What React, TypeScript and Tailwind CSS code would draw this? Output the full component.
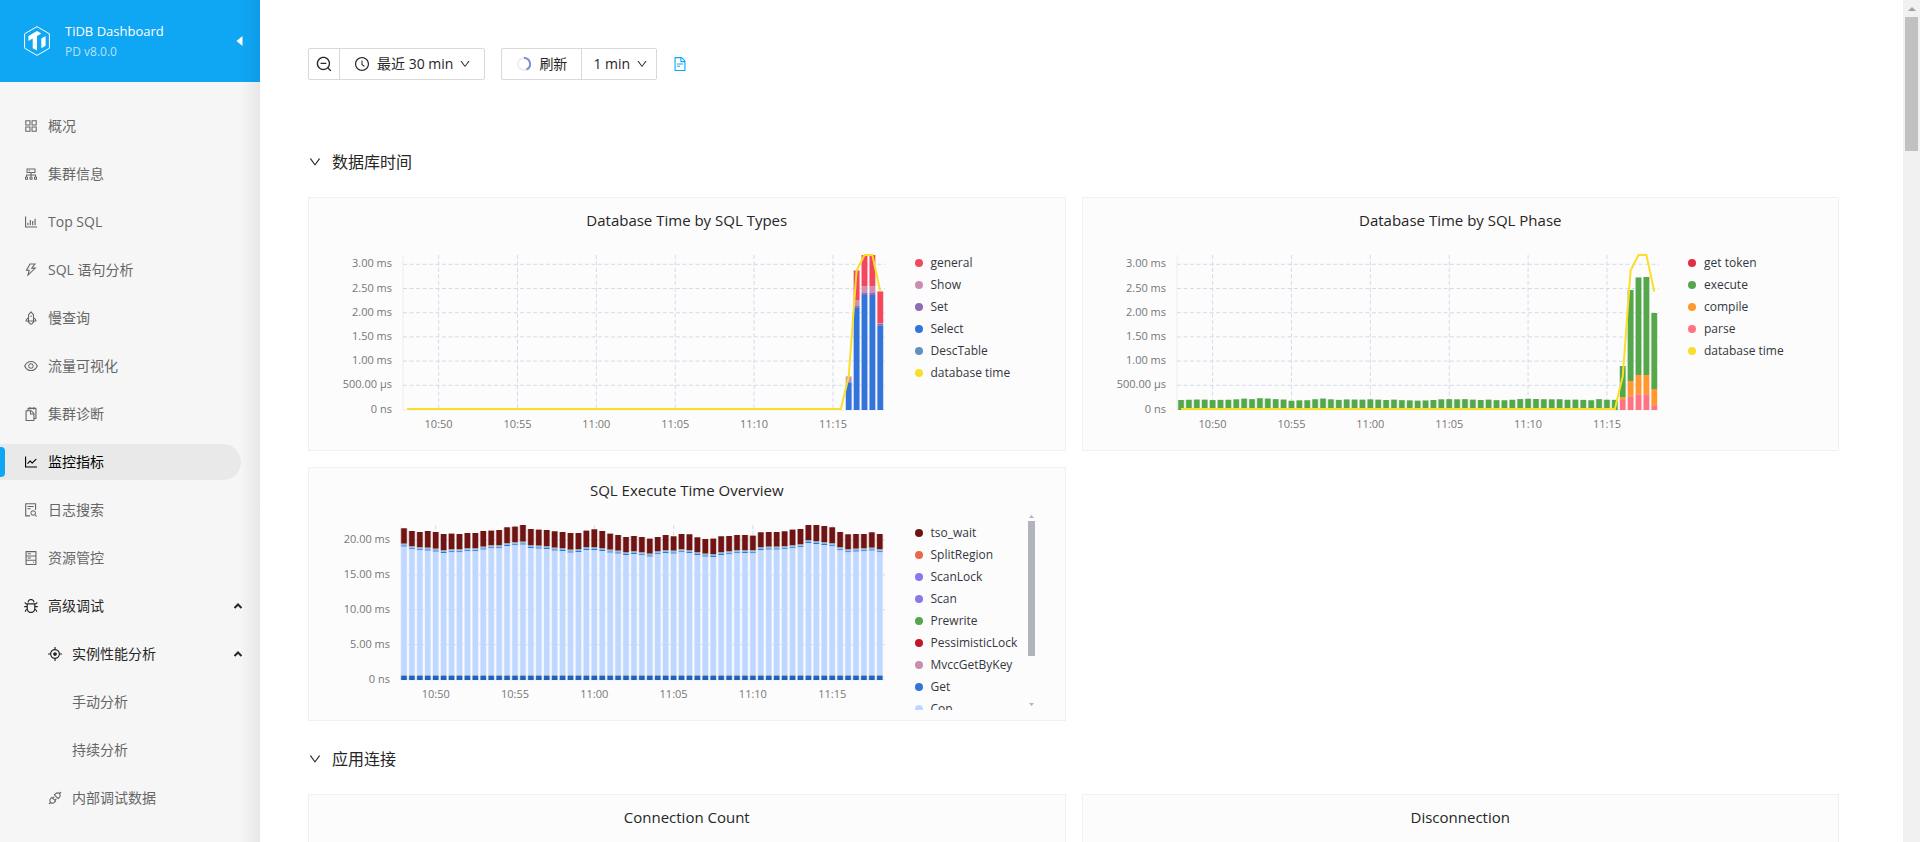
import React from 'react';
import {
  AiOutlineAim,
  AiOutlineApi,
  AiOutlineAppstore,
  AiOutlineBarChart,
  AiOutlineBug,
  AiOutlineClockCircle,
  AiOutlineCluster,
  AiOutlineDown,
  AiOutlineEye,
  AiOutlineFileSearch,
  AiOutlineFileText,
  AiOutlineHdd,
  AiOutlineLineChart,
  AiOutlineRocket,
  AiOutlineSnippets,
  AiOutlineThunderbolt,
  AiOutlineZoomOut,
} from 'react-icons/ai';
import type { IconType } from 'react-icons';
import clsx from 'clsx';

interface MenuItem {
  label: string;
  icon?: IconType;
  level?: number;
  active?: boolean;
  open?: boolean;
}

interface LegendItem {
  name: string;
  color: string;
}

interface Segment {
  top: number;
  bottom: number;
  color: string;
}

interface Bar {
  index: number;
  segments: Segment[];
}

interface ChartProps {
  left: number;
  firstTick: number;
  step: number;
  yTicks: { label: string; y: number }[];
  bars: Bar[];
  line?: [number, number][];
}

const MENU: MenuItem[] = [
  { label: '概况', icon: AiOutlineAppstore },
  { label: '集群信息', icon: AiOutlineCluster },
  { label: 'Top SQL', icon: AiOutlineBarChart },
  { label: 'SQL 语句分析', icon: AiOutlineThunderbolt },
  { label: '慢查询', icon: AiOutlineRocket },
  { label: '流量可视化', icon: AiOutlineEye },
  { label: '集群诊断', icon: AiOutlineSnippets },
  { label: '监控指标', icon: AiOutlineLineChart, active: true },
  { label: '日志搜索', icon: AiOutlineFileSearch },
  { label: '资源管控', icon: AiOutlineHdd },
  { label: '高级调试', icon: AiOutlineBug, open: true },
  { label: '实例性能分析', icon: AiOutlineAim, level: 1, open: true },
  { label: '手动分析', level: 2 },
  { label: '持续分析', level: 2 },
  { label: '内部调试数据', icon: AiOutlineApi, level: 1 },
];

const TIMES = ['10:50', '10:55', '11:00', '11:05', '11:10', '11:15'];

// chart drawing area, in svg units
const TOP = 15;
const BASE = 170;

const MS_TICKS = ['0 ns', '500.00 µs', '1.00 ms', '1.50 ms', '2.00 ms', '2.50 ms', '3.00 ms'].map(
  (label, i) => ({ label, y: 169.5 - i * 24.2 })
);
const OVERVIEW_TICKS = ['0 ns', '5.00 ms', '10.00 ms', '15.00 ms', '20.00 ms'].map((label, i) => ({
  label,
  y: 169.5 - i * 34.9,
}));

// [bar index, y]
const DB_TIME: [number, number][] = [
  [0, 169],
  [55, 169],
  [56, 136.5],
  [57, 30.5],
  [58, 15],
  [59, 15],
  [60, 51.5],
];

const RED = '#f5475c';
const PINK = '#cc8fb0';
const PURPLE = '#8f6bb8';
const BLUE = '#3274d9';
const GREEN = '#56a64b';
const ORANGE = '#ff9830';
const ROSE = '#ff7383';

// stacks a bar from its top edge down to the base line
const stack = (index: number, parts: [number, string][]): Bar => ({
  index,
  segments: parts.map(([top, color], i) => ({
    top,
    bottom: i + 1 < parts.length ? parts[i + 1][0] : BASE,
    color,
  })),
});

const TYPE_BARS: Bar[] = [
  stack(56, [[136.5, PINK], [142.5, BLUE]]),
  stack(57, [[30.5, RED], [60.5, PINK], [66, PURPLE], [67.5, BLUE]]),
  stack(58, [[TOP, RED], [46.5, PINK], [53, PURPLE], [55, BLUE]]),
  stack(59, [[TOP, RED], [46.5, PINK], [53, PURPLE], [55, BLUE]]),
  stack(60, [[51.5, RED], [83, PINK], [84, PURPLE], [85.5, BLUE]]),
];

const IDLE_HEIGHTS = [
  10, 10.2, 10.4, 10.3, 9.9, 10.1, 10.2, 10.6, 11.3, 10.8, 11.7, 11.4, 10.8, 10.4, 9.2, 9.6, 9.7, 10.7,
  11.4, 10.6, 10.1, 10.5, 10.4, 10.3, 10.6, 10.3, 10, 10.3, 9.8, 9.6, 9.3, 9.5, 10, 10.6, 10.8, 10.6,
  10.8, 10.3, 10, 10.3, 9.8, 9.7, 10.2, 10.9, 11.2, 11, 10.7, 10.6, 10.7, 10.2, 10.3, 10.1, 9.7, 10.8,
  10.2, 10.1,
];

const PHASE_BARS: Bar[] = [
  ...IDLE_HEIGHTS.map((h, i) => stack(i, [[BASE - h, GREEN]])),
  stack(56, [[126, GREEN], [157.5, ORANGE], [160, ROSE]]),
  stack(57, [[50, GREEN], [141, ORANGE], [156.5, ROSE]]),
  stack(58, [[37.5, GREEN], [135, ORANGE], [154.5, ROSE]]),
  stack(59, [[37, GREEN], [135, ORANGE], [154.5, ROSE]]),
  stack(60, [[73, GREEN], [149, ORANGE], [165.5, ROSE]]),
];

// [top of tso_wait, bottom of tso_wait] in thirds of a unit, counted from 50 units above the plot
const TSO_WAIT = [
  [205, 251], [213, 259], [216, 262], [213, 263], [216, 266], [222, 270], [221, 268], [222, 268],
  [219, 265], [219, 265], [213, 260], [212, 256], [210, 256], [202, 249], [200, 247], [195, 245],
  [207, 255], [209, 257], [210, 258], [214, 263], [216, 264], [219, 269], [219, 267], [212, 261],
  [208, 261], [213, 264], [221, 269], [225, 272], [231, 276], [228, 273], [231, 277], [236, 281],
  [231, 274], [225, 270], [229, 272], [222, 268], [223, 270], [232, 276], [237, 281], [236, 282],
  [229, 276], [228, 274], [225, 271], [225, 270], [227, 271], [217, 261], [216, 260], [216, 260],
  [214, 259], [209, 256], [207, 253], [195, 240], [195, 243], [198, 246], [202, 250], [216, 262],
  [223, 268], [222, 266], [222, 265], [217, 263], [222, 268],
];

const OVERVIEW_BARS: Bar[] = TSO_WAIT.map(([top, bottom], i) => {
  const edge = bottom / 3 - 50;
  return stack(i, [
    [top / 3 - 50, '#701313'],
    [edge, '#8ea79a'],
    [edge + 1, '#8ab8ff'],
    [edge + 2, '#3274d9'],
    [edge + 3, '#c0d8ff'],
    [165, '#8fb5a8'],
    [166, '#1f60c4'],
  ]);
});

const TYPE_LEGEND: LegendItem[] = [
  { name: 'general', color: '#f2495c' },
  { name: 'Show', color: '#ca8eae' },
  { name: 'Set', color: '#8f6bb8' },
  { name: 'Select', color: '#3274d9' },
  { name: 'DescTable', color: '#6092c0' },
  { name: 'database time', color: '#fade2a' },
];

const PHASE_LEGEND: LegendItem[] = [
  { name: 'get token', color: '#e02f44' },
  { name: 'execute', color: '#56a64b' },
  { name: 'compile', color: '#ff9830' },
  { name: 'parse', color: '#ff7383' },
  { name: 'database time', color: '#fade2a' },
];

const OVERVIEW_LEGEND: LegendItem[] = [
  { name: 'tso_wait', color: '#701313' },
  { name: 'SplitRegion', color: '#e9674b' },
  { name: 'ScanLock', color: '#8877ee' },
  { name: 'Scan', color: '#8877ee' },
  { name: 'Prewrite', color: '#56a64b' },
  { name: 'PessimisticLock', color: '#c4162a' },
  { name: 'MvccGetByKey', color: '#ca8eae' },
  { name: 'Get', color: '#3274d9' },
  { name: 'Cop', color: '#c0d8ff' },
];

const Logo: React.FC = () => (
  <svg width="26" height="30" viewBox="0 0 26 30" fill="none">
    <path d="M13 0.6 L25.4 7.8 V22.2 L13 29.4 L0.6 22.2 V7.8 Z" stroke="#fff" strokeWidth="1" />
    <path d="M13 5 L17.3 7.5 L13 10 V24.6 L8.7 22.2 V12.4 L4.4 15 V10 Z" fill="#fff" />
    <path d="M17.3 12.5 L21.6 10 V19.8 L17.3 22.2 Z" fill="#fff" />
  </svg>
);

const SidebarItem: React.FC<{ item: MenuItem }> = ({ item }) => {
  const Icon = item.icon;
  return (
    <li>
      <a
        href="#"
        className={clsx(
          'relative mr-[19px] flex h-9 items-center rounded-r-full',
          item.level === 1 && 'pl-[47px]',
          item.level === 2 && 'pl-[72px]',
          !item.level && 'pl-[23px]',
          item.active && 'bg-[#e9e9e9] text-black',
          item.open && 'text-[#262626]',
          !item.active && !item.open && 'text-[#666]'
        )}
      >
        {item.active && <span className="absolute top-[3px] left-0 h-[30px] w-[5px] rounded-r bg-[#0fa6f4]" />}
        {Icon && <Icon size={16} className="mr-[9px] shrink-0" />}
        <span>{item.label}</span>
        {item.open && (
          <svg className="-mr-0.5 ml-auto" width="10" height="8" viewBox="0 0 10 8" fill="none">
            <path d="M1.5 6 L5 2.5 L8.5 6" stroke="#262626" strokeWidth="2" />
          </svg>
        )}
      </a>
    </li>
  );
};

const Sidebar: React.FC = () => (
  <aside className="relative w-[260px] shrink-0 overflow-hidden bg-[#f6f6f6]">
    <header className="flex h-[82px] items-center bg-[#0fa6f4] pr-[17px] pl-6 text-white">
      <Logo />
      <div className="ml-[15px]">
        <div className="text-[13px] leading-[22px]">TiDB Dashboard</div>
        <div className="text-xs leading-5 text-white/70">PD v8.0.0</div>
      </div>
      <button type="button" aria-label="Collapse" className="ml-auto">
        <svg width="7" height="10" viewBox="0 0 7 10">
          <path d="M6.5 0 V10 L0.5 5 Z" fill="#fff" />
        </svg>
      </button>
    </header>
    <ul className="mt-[26px] flex flex-col gap-3">
      {MENU.map((item) => (
        <SidebarItem key={item.label} item={item} />
      ))}
    </ul>
    {/* Edge shadow */}
    <div className="pointer-events-none absolute inset-y-0 right-0 w-5 bg-linear-to-r from-black/0 to-black/6" />
  </aside>
);

const Toolbar: React.FC = () => (
  <div className="flex items-center text-[#262626]">
    <div className="flex h-8 rounded-xs border border-[#d9d9d9]">
      <button type="button" aria-label="Zoom out" className="flex w-[30px] items-center justify-center">
        <AiOutlineZoomOut size={18} />
      </button>
      <button type="button" className="flex items-center border-l border-[#d9d9d9] pr-[13px] pl-[14px]">
        <AiOutlineClockCircle size={16} className="mr-[7px]" />
        最近 30 min
        <AiOutlineDown size={12} className="ml-1.5" />
      </button>
    </div>
    <div className="ml-4 flex h-8 rounded-xs border border-[#d9d9d9]">
      <button type="button" className="flex items-center pr-[14px] pl-[15px]">
        <svg width="14" height="14" viewBox="0 0 14 14" fill="none" className="mr-2">
          <circle cx="7" cy="7" r="6" stroke="#eee" strokeWidth="2" />
          <path d="M7 1 A6 6 0 0 1 9.5 12.5" stroke="#7a8fd4" strokeWidth="2" />
        </svg>
        刷新
      </button>
      <button type="button" className="flex items-center border-l border-[#d9d9d9] pr-2 pl-[11px]">
        1 min
        <AiOutlineDown size={12} className="ml-1.5" />
      </button>
    </div>
    <a href="#" aria-label="Docs" className="ml-[15px] text-[#0fa6f4]">
      <AiOutlineFileText size={16} />
    </a>
  </div>
);

const Chart: React.FC<ChartProps> = ({ left, firstTick, step, yTicks, bars, line }) => {
  const minute = step / 10;
  const first = firstTick - 4 * minute;
  const centre = (i: number) => first + i * minute;

  return (
    <svg
      className="h-[200px] min-w-0 flex-1"
      viewBox="0 0 600 200"
      preserveAspectRatio="xMinYMin meet"
      fontSize="11"
      fill="#777"
    >
      <path d={`M${left} ${TOP} V170 H576`} stroke="#eee" fill="none" />
      <g stroke="#d3daea" strokeDasharray="4 2.5">
        {yTicks.slice(1).map((t) => (
          <line key={t.label} x1={left} x2={576} y1={t.y} y2={t.y} />
        ))}
        {TIMES.map((t, i) => (
          <line key={t} x1={firstTick + i * step} x2={firstTick + i * step} y1={TOP} y2={169} />
        ))}
      </g>
      {bars.map((bar) => (
        <g key={bar.index}>
          <rect
            x={centre(bar.index) - 3.4}
            y={bar.segments[0].top - 0.3}
            width={6.8}
            height={BASE - bar.segments[0].top + 0.3}
            fill="#fff"
            opacity={0.6}
          />
          {bar.segments.map((s) => (
            <g key={s.top} fill={s.color}>
              <rect x={centre(bar.index) - 3.4} y={s.top} width={6.8} height={s.bottom - s.top} opacity={0.35} />
              <rect x={centre(bar.index) - 2.7} y={s.top} width={5.4} height={s.bottom - s.top} />
            </g>
          ))}
        </g>
      ))}
      {line && (
        <polyline
          points={line.map(([i, y]) => `${centre(i)},${y}`).join(' ')}
          fill="none"
          stroke="#fade2a"
          strokeWidth="2"
        />
      )}
      {yTicks.map((t) => (
        <text key={t.label} x={left - 11} y={t.y + 3} textAnchor="end">
          {t.label}
        </text>
      ))}
      {TIMES.map((t, i) => (
        <text key={t} x={firstTick + i * step} y={188} textAnchor="middle">
          {t}
        </text>
      ))}
    </svg>
  );
};

const Legend: React.FC<{ items: LegendItem[]; scroll?: boolean }> = ({ items, scroll }) => (
  <div className="mr-[30px] flex h-[200px] w-[120px] shrink-0 overflow-hidden">
    <ul className="flex-1 pt-3 text-xs leading-[22px] text-[#343741]">
      {items.map((item) => (
        <li key={item.name} className="flex items-center gap-2 whitespace-nowrap">
          <span className="size-2 shrink-0 rounded-full" style={{ backgroundColor: item.color }} />
          {item.name}
        </li>
      ))}
    </ul>
    {scroll && (
      <div className="flex w-[7px] flex-col items-center pt-[5px] pb-1">
        <svg width="5" height="3" viewBox="0 0 5 3" fill="#b2b4bb">
          <path d="M0 3 L2.5 0 L5 3 Z" />
        </svg>
        <div className="mt-[3px] h-[135px] w-full bg-[#b2b4bb]" />
        <svg width="5" height="3" viewBox="0 0 5 3" fill="#b2b4bb" className="mt-auto">
          <path d="M0 0 L2.5 3 L5 0 Z" />
        </svg>
      </div>
    )}
  </div>
);

const Card: React.FC<{ title: string; children?: React.ReactNode }> = ({ title, children }) => (
  <section className="border border-[#f0f0f0] bg-[#fcfcfc] py-2.5">
    <h3 className="mb-2 text-center text-[15px] leading-6 font-medium text-[#262626]">{title}</h3>
    <div className="flex min-h-[200px]">{children}</div>
  </section>
);

const SectionTitle: React.FC<{ children: string }> = ({ children }) => (
  <button type="button" className="mt-[26px] mb-[23px] flex h-6 items-center text-base text-[#262626]">
    <AiOutlineDown size={14} className="mr-2.5" />
    {children}
  </button>
);

const PageScrollbar: React.FC = () => (
  <div className="flex w-[17px] shrink-0 flex-col items-center bg-[#f1f1f1] pt-[7px]">
    <svg width="8" height="4" viewBox="0 0 8 4" fill="#a3a3a3">
      <path d="M0 4 L4 0 L8 4 Z" />
    </svg>
    <div className="mt-1.5 h-[134px] w-[13px] bg-[#c1c1c1]" />
  </div>
);

const App: React.FC = () => (
  <div className="flex h-screen overflow-hidden bg-white font-['Open_Sans','Noto_Sans_CJK_SC',sans-serif] text-sm">
    <Sidebar />
    <main className="min-w-0 flex-1 overflow-hidden pt-12 pr-16 pl-12">
      <Toolbar />
      <div className="mt-11 flex flex-col items-start">
        <SectionTitle>数据库时间</SectionTitle>
        <div className="grid w-full grid-cols-2 gap-4">
          <Card title="Database Time by SQL Types">
            <Chart left={94} firstTick={129.6} step={78.87} yTicks={MS_TICKS} bars={TYPE_BARS} line={DB_TIME} />
            <Legend items={TYPE_LEGEND} />
          </Card>
          <Card title="Database Time by SQL Phase">
            <Chart left={94} firstTick={129.6} step={78.87} yTicks={MS_TICKS} bars={PHASE_BARS} line={DB_TIME} />
            <Legend items={PHASE_LEGEND} />
          </Card>
          <Card title="SQL Execute Time Overview">
            <Chart left={92} firstTick={126.7} step={79.3} yTicks={OVERVIEW_TICKS} bars={OVERVIEW_BARS} />
            <Legend items={OVERVIEW_LEGEND} scroll />
          </Card>
        </div>
        <SectionTitle>应用连接</SectionTitle>
        <div className="grid w-full grid-cols-2 gap-4">
          <Card title="Connection Count" />
          <Card title="Disconnection" />
        </div>
      </div>
    </main>
    <PageScrollbar />
  </div>
);

export default App;
